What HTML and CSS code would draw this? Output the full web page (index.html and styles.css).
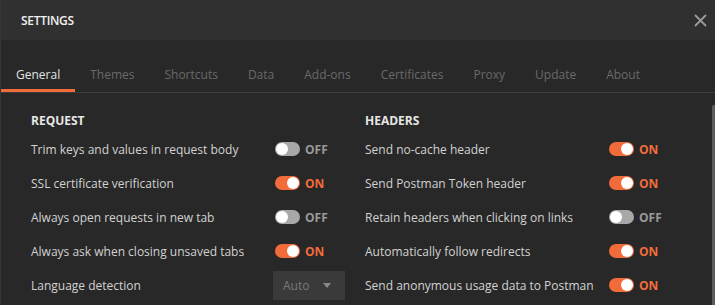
FILE: index.html
```html
<!DOCTYPE html>
<html lang="en">
<head>
    <meta charset="UTF-8">
    <meta name="viewport" content="width=device-width, initial-scale=1.0">
    <title>Settings</title>
    <link rel="stylesheet" href="styles.css">
</head>
<body>
    <div class="modal">
        <div class="modal-header">
            <span class="modal-title">SETTINGS</span>
            <span class="close">
                <svg width="13" height="13" viewBox="0 0 13 13">
                    <path d="M1 1 L12 12 M12 1 L1 12" stroke="#9a9a9a" stroke-width="1.8" fill="none"/>
                </svg>
            </span>
        </div>

        <div class="tabs">
            <div class="tab active">General</div>
            <div class="tab">Themes</div>
            <div class="tab">Shortcuts</div>
            <div class="tab">Data</div>
            <div class="tab">Add-ons</div>
            <div class="tab">Certificates</div>
            <div class="tab">Proxy</div>
            <div class="tab">Update</div>
            <div class="tab">About</div>
        </div>

        <div class="content">
            <div class="column">
                <div class="section-title">REQUEST</div>
                <div class="setting">
                    <span class="label">Trim keys and values in request body</span>
                    <span class="toggle"></span><span class="state">OFF</span>
                </div>
                <div class="setting">
                    <span class="label">SSL certificate verification</span>
                    <span class="toggle on"></span><span class="state on">ON</span>
                </div>
                <div class="setting">
                    <span class="label">Always open requests in new tab</span>
                    <span class="toggle"></span><span class="state">OFF</span>
                </div>
                <div class="setting">
                    <span class="label">Always ask when closing unsaved tabs</span>
                    <span class="toggle on"></span><span class="state on">ON</span>
                </div>
                <div class="setting">
                    <span class="label">Language detection</span>
                    <div class="dropdown">
                        <span>Auto</span>
                        <span class="caret"></span>
                    </div>
                </div>
            </div>
            <div class="column">
                <div class="section-title">HEADERS</div>
                <div class="setting">
                    <span class="label">Send no-cache header</span>
                    <span class="toggle on"></span><span class="state on">ON</span>
                </div>
                <div class="setting">
                    <span class="label">Send Postman Token header</span>
                    <span class="toggle on"></span><span class="state on">ON</span>
                </div>
                <div class="setting">
                    <span class="label">Retain headers when clicking on links</span>
                    <span class="toggle"></span><span class="state">OFF</span>
                </div>
                <div class="setting">
                    <span class="label">Automatically follow redirects</span>
                    <span class="toggle on"></span><span class="state on">ON</span>
                </div>
                <div class="setting">
                    <span class="label">Send anonymous usage data to Postman</span>
                    <span class="toggle on"></span><span class="state on">ON</span>
                </div>
            </div>
            <div class="scrollbar"></div>
        </div>
    </div>
</body>
</html>
```

FILE: styles.css
```css
body {
    margin: 0;
    font-family: "Open Sans", "Liberation Sans", sans-serif;
    background: #282828;
    color: #d4d4d4;
    font-size: 12px;
}
.modal {
    height: 305px;
    overflow: hidden;
    border-left: 1px solid #363636;
}
.modal-header {
    height: 40px;
    background: #303030;
    display: flex;
    align-items: center;
    justify-content: space-between;
    padding: 0 8px 0 20px;
}
.modal-title {
    font-size: 12px;
    font-weight: 600;
    color: #f0f0f0;
    letter-spacing: -0.3px;
}
.close {
    display: flex;
    width: 13px;
    height: 13px;
}
.tabs {
    display: flex;
    margin-top: 24px;
    border-bottom: 1px solid #3c3c3c;
}
.tab {
    padding: 0 15px;
    height: 28px;
    line-height: 22px;
    font-size: 12px;
    color: #6a6a6a;
    border-bottom: 3px solid transparent;
    box-sizing: border-box;
}
.tab.active {
    color: #e2e2e2;
    border-bottom-color: #f26b3a;
}
.content {
    display: flex;
    padding: 17px 0 0 30px;
    position: relative;
}
.column {
    width: 334px;
}
.section-title {
    font-weight: 700;
    font-size: 12px;
    color: #e6e6e6;
    height: 22px;
    line-height: 22px;
}
.setting {
    display: flex;
    align-items: center;
    height: 34px;
}
.label {
    width: 244px;
    font-size: 12px;
    color: #d2d2d2;
}
.toggle {
    position: relative;
    width: 25px;
    height: 14px;
    border-radius: 7px;
    background: #a8a8a8;
}
.toggle::after {
    content: "";
    position: absolute;
    top: 1px;
    left: 1px;
    width: 12px;
    height: 12px;
    border-radius: 50%;
    background: #ffffff;
}
.toggle.on {
    background: #f26b3a;
}
.toggle.on::after {
    left: 12px;
}
.state {
    margin-left: 5px;
    font-weight: 700;
    font-size: 12px;
    color: #9a9a9a;
}
.state.on {
    color: #f26b3a;
}
.dropdown {
    display: flex;
    align-items: center;
    justify-content: space-between;
    margin-left: -2px;
    width: 72px;
    height: 29px;
    box-sizing: border-box;
    padding: 0 14px 0 10px;
    background: #3a3a3a;
    color: #787878;
    font-size: 12px;
}
.caret {
    width: 0;
    height: 0;
    border-left: 4px solid transparent;
    border-right: 4px solid transparent;
    border-top: 5px solid #8a8a8a;
}
.scrollbar {
    position: absolute;
    right: 0;
    top: 12px;
    width: 3px;
    height: 200px;
    background: #5c5c5c;
    border-radius: 2px 0 0 0;
}
```
